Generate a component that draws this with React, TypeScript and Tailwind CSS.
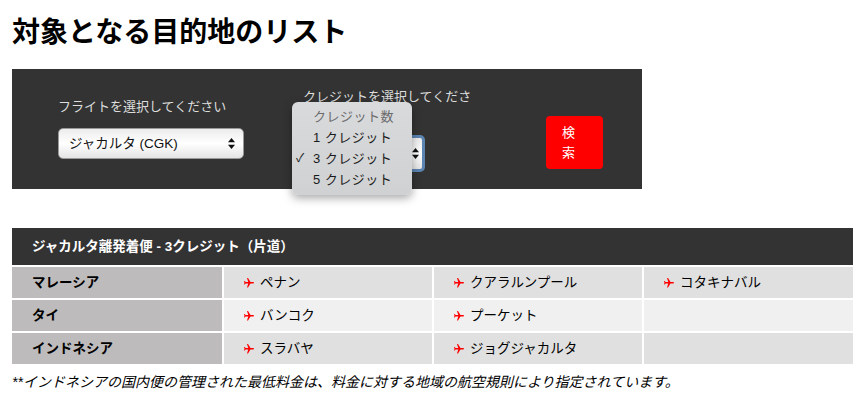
import React from 'react';

const font = "font-['Liberation_Sans','Noto_Sans_CJK_JP',sans-serif]";

const PlaneIcon = () => (
    <svg viewBox="0 0 24 24" className="w-[12px] h-[12px] shrink-0 rotate-90" fill="#ff0000">
        <path d="M21 16v-2l-8-5V3.5c0-.83-.67-1.5-1.5-1.5S10 2.67 10 3.5V9l-8 5v2l8-2.5V19l-2 1.5V22l3.5-1 3.5 1v-1.5L13 19v-5.5l8 2.5z" />
    </svg>
);

const SelectArrows = () => (
    <svg viewBox="0 0 7 11" className="w-[7px] h-[11px]" fill="#111">
        <path d="M3.5 0L7 4.2H0z" />
        <path d="M3.5 11L0 6.8h7z" />
    </svg>
);

interface Row {
    country: string;
    cities: string[];
}

const rows: Row[] = [
    { country: 'マレーシア', cities: ['ペナン', 'クアラルンプール', 'コタキナバル'] },
    { country: 'タイ', cities: ['バンコク', 'プーケット'] },
    { country: 'インドネシア', cities: ['スラバヤ', 'ジョグジャカルタ'] },
];

const creditOptions = ['1 クレジット', '3 クレジット', '5 クレジット'];

const App: React.FC = () => {
    return (
        <div className={`${font} w-[860px] h-[405px] bg-white pl-[12px] pt-[15px] text-black overflow-hidden`}>
            <h1 className="text-[28px] font-bold leading-[36px]">対象となる目的地のリスト</h1>

            {/* search panel */}
            <div className="relative mt-[18px] w-[630px] h-[120px] bg-[#333333] flex items-start">
                <div className="ml-[46px] mt-[30px] w-[186px]">
                    <div className="text-[13px] leading-[16px] text-[#dddddd]">フライトを選択してください</div>
                    <div className="mt-[13px] h-[31px] w-[186px] rounded-[5px] border border-[#9a9a9a] bg-gradient-to-b from-[#ececec] via-white to-[#e4e4e4] flex items-center justify-between pl-[10px] pr-[8px]">
                        <span className="text-[13.5px] leading-[16px] text-[#111]">ジャカルタ (CGK)</span>
                        <SelectArrows />
                    </div>
                </div>

                <div className="ml-[59px] mt-[19px] w-[170px]">
                    <div className="text-[13px] leading-[17px] text-[#dddddd]">クレジットを選択してください</div>
                    <div className="mt-[13px] h-[37px] w-[122px] rounded-[5px] border-[3px] border-[#5b84b1] bg-gradient-to-b from-[#ececec] via-white to-[#e4e4e4] flex items-center justify-end pr-[3px]">
                        <SelectArrows />
                    </div>
                </div>

                <button className="ml-[73px] mt-[47px] w-[57px] h-[53px] rounded-[4px] bg-[#ff0000] text-white text-[13px] leading-[20px] pl-[16px] text-left">
                    <span className="block w-[14px]">検索</span>
                </button>

                {/* open dropdown menu */}
                <div className="absolute left-[280px] top-[33px] w-[120px] rounded-[6px] bg-gradient-to-b from-[#d9dadc] to-[#d0d1d3] shadow-[0_3px_10px_rgba(0,0,0,0.35)] pt-[4px] pb-[5px]">
                    <div className="h-[21px] pl-[21px] text-[13px] leading-[21px] text-[#6b6b6b] tracking-[0.5px]">クレジット数</div>
                    {creditOptions.map((opt, i) => (
                        <div key={opt} className="relative h-[21px] pl-[21px] text-[13px] leading-[21px] text-[#1a1a1a] tracking-[0.5px]">
                            {i === 1 && <span className="absolute left-[4px] top-0 text-[12px]">✓</span>}
                            {opt}
                        </div>
                    ))}
                </div>
            </div>

            {/* destinations table */}
            <div className="mt-[39px] w-[841px] grid grid-cols-[210px_208px_208px_209px] gap-[2px] bg-white">
                <div className="col-span-4 h-[37px] bg-[#333333] text-white font-bold text-[13.5px] leading-[37px] pl-[20px]">
                    ジャカルタ離発着便 - 3クレジット（片道）
                </div>
                {rows.map((row, r) => (
                    <React.Fragment key={row.country}>
                        <div className="h-[31px] bg-[#bdbbbb] font-bold text-[13.5px] leading-[31px] pl-[20px]">{row.country}</div>
                        {[0, 1, 2].map(c => (
                            <div
                                key={c}
                                className={`h-[31px] flex items-center gap-[5px] pl-[19px] text-[13.5px] ${r === 1 ? 'bg-[#f0f0f0]' : 'bg-[#e0e0e0]'}`}
                            >
                                {row.cities[c] && (
                                    <>
                                        <PlaneIcon />
                                        <span className="leading-[18px]">{row.cities[c]}</span>
                                    </>
                                )}
                            </div>
                        ))}
                    </React.Fragment>
                ))}
            </div>

            <p className="mt-[9px] text-[14px] italic leading-[18px]">
                **インドネシアの国内便の管理された最低料金は、料金に対する地域の航空規則により指定されています。
            </p>
        </div>
    );
};

export default App;
